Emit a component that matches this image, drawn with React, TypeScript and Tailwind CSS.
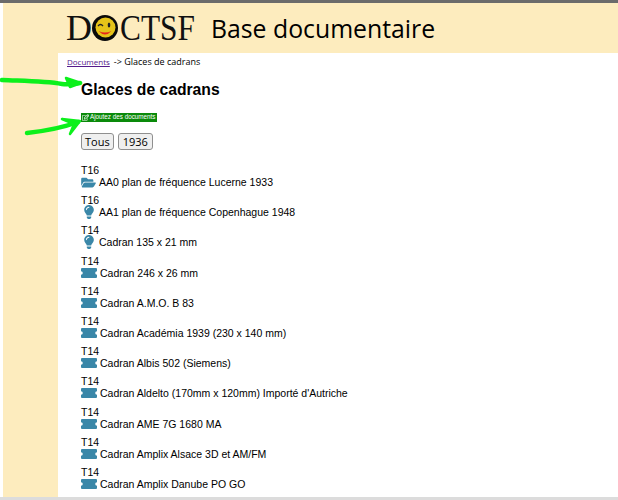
import { FaFolderOpen, FaLightbulb, FaRegEdit } from "react-icons/fa";

const documents = [
  { tag: "T16", icon: "folder", title: "AA0 plan de fréquence Lucerne 1933" },
  { tag: "T16", icon: "bulb", title: "AA1 plan de fréquence Copenhague 1948" },
  { tag: "T14", icon: "bulb", title: "Cadran 135 x 21 mm" },
  { tag: "T14", icon: "ticket", title: "Cadran 246 x 26 mm" },
  { tag: "T14", icon: "ticket", title: "Cadran A.M.O. B 83" },
  { tag: "T14", icon: "ticket", title: "Cadran Académia 1939 (230 x 140 mm)" },
  { tag: "T14", icon: "ticket", title: "Cadran Albis 502 (Siemens)" },
  { tag: "T14", icon: "ticket", title: "Cadran Aldelto (170mm x 120mm) Importé d'Autriche" },
  { tag: "T14", icon: "ticket", title: "Cadran AME 7G 1680 MA" },
  { tag: "T14", icon: "ticket", title: "Cadran Amplix Alsace 3D et AM/FM" },
  { tag: "T14", icon: "ticket", title: "Cadran Amplix Danube PO GO" },
];

function TicketIcon() {
  return (
    <svg viewBox="0 0 16 10" className="h-[10px] w-[16px] text-[#3a87a8]" fill="currentColor">
      <path d="M1 0h14a1 1 0 0 1 1 1v2.2a1.8 1.8 0 0 0 0 3.6V9a1 1 0 0 1-1 1H1a1 1 0 0 1-1-1V6.800a1.800 1.800 0 0 0 0-3.600V1a1 1 0 0 1 1-1z" />
    </svg>
  );
}

function DocIcon({ icon }: { icon: string }) {
  if (icon === "folder") return <FaFolderOpen className="h-[13px] w-[15px] text-[#3a87a8]" />;
  if (icon === "bulb") return <FaLightbulb className="ml-[2px] mr-[1px] h-[14px] w-[12px] text-[#3a87a8]" />;
  return <TicketIcon />;
}

function Smiley() {
  return (
    <svg viewBox="0 0 26 26" className="h-[26px] w-[26px] shrink-0">
      <circle cx="13" cy="13" r="13" fill="#0a0a0a" />
      <circle cx="13.500" cy="12.500" r="10" fill="#e6c419" />
      <path d="M6 11q2.500-3 5 0" stroke="#222" strokeWidth="1.300" fill="none" />
      <ellipse cx="17" cy="10" rx="1.300" ry="2.500" fill="#222" />
      <path d="M6.500 16q6.500 7 13 0q-6.500 3-13 0z" fill="#e8261c" />
    </svg>
  );
}

function GreenArrow({ line, head, className }: { line: string; head: string; className: string }) {
  return (
    <svg className={className} viewBox="0 0 90 40" fill="none">
      <path d={line} stroke="#0cf01c" strokeWidth="4.500" strokeLinecap="round" strokeLinejoin="round" />
      <path d={head} fill="#0cf01c" stroke="#0cf01c" strokeWidth="2.500" strokeLinejoin="round" />
    </svg>
  );
}

export default function App() {
  return (
    <div className="relative h-[500px] w-[618px] overflow-hidden bg-white font-['Liberation_Sans',sans-serif] text-black">
      <div className="h-[3px] bg-[#6b6b6b]" />
      <div className="ml-[3px] flex h-[494px] flex-col bg-[#fdecbe]">
        {/* Header */}
        <header className="flex h-[50px] shrink-0 items-center pl-[63px]">
          <div className="flex w-[145px] items-center font-['Liberation_Serif',serif] text-[36px] font-normal leading-none text-[#111]">
            <span>D</span>
            <Smiley />
            <span className="ml-[2px] inline-block origin-left scale-x-[0.87]">CTSF</span>
          </div>
          <h1 className="font-['Open_Sans',sans-serif] text-[24.800px] font-normal leading-none">Base documentaire</h1>
        </header>

        {/* Content */}
        <main className="ml-[55px] flex-1 bg-white pl-[9px]">
          <nav className="mt-[2px] font-['Open_Sans',sans-serif] text-[9px] leading-[14px]">
            <a className="text-[8px] text-[#551a8b] underline">Documents</a>
            <span className="ml-[4px]">-&gt;</span> Glaces de cadrans
          </nav>
          <div className="pl-[14px]">
            <h2 className="mt-[12px] text-[15.700px] font-bold leading-[18px]">Glaces de cadrans</h2>
            <a className="mt-[14px] flex h-[9px] w-[76px] items-center gap-[1px] bg-[#0a8a0a] pl-[1px] text-[6.300px] leading-none text-white">
              <FaRegEdit className="h-[7px] w-[7px]" />
              Ajoutez des documents
            </a>
            <div className="mt-[11px] flex gap-[4px] font-['Open_Sans',sans-serif] text-[11px]">
              <button className="h-[17px] rounded-[3px] border border-[#8f8f8f] bg-[#efefef] px-[3px] leading-none">Tous</button>
              <button className="h-[17px] rounded-[3px] border border-[#8f8f8f] bg-[#efefef] px-[4px] leading-none">1936</button>
            </div>
            <ul className="mt-[14px] flex flex-col gap-[6.200px] text-[10.500px] leading-[12px]">
              {documents.map((doc) => (
                <li key={doc.title}>
                  <div>{doc.tag}</div>
                  <div className="flex h-[12px] items-center gap-[3px]">
                    <DocIcon icon={doc.icon} />
                    <span>{doc.title}</span>
                  </div>
                </li>
              ))}
            </ul>
          </div>
        </main>
      </div>
      <div className="h-[3px] bg-[#dcdcdc]" />

      {/* Hand-drawn arrows */}
      <GreenArrow
        className="absolute left-0 top-[66px] h-[40px] w-[90px]"
        line="M2 14C25 15 45 15 62 18C68 19 74 18 80 17"
        head="M66 12L81 17L70 21Z"
      />
      <GreenArrow
        className="absolute left-[20px] top-[104px] h-[40px] w-[90px]"
        line="M7 29C25 27 42 24 58 18"
        head="M42 15L60 17L50 30L54 20Z"
      />
    </div>
  );
}
